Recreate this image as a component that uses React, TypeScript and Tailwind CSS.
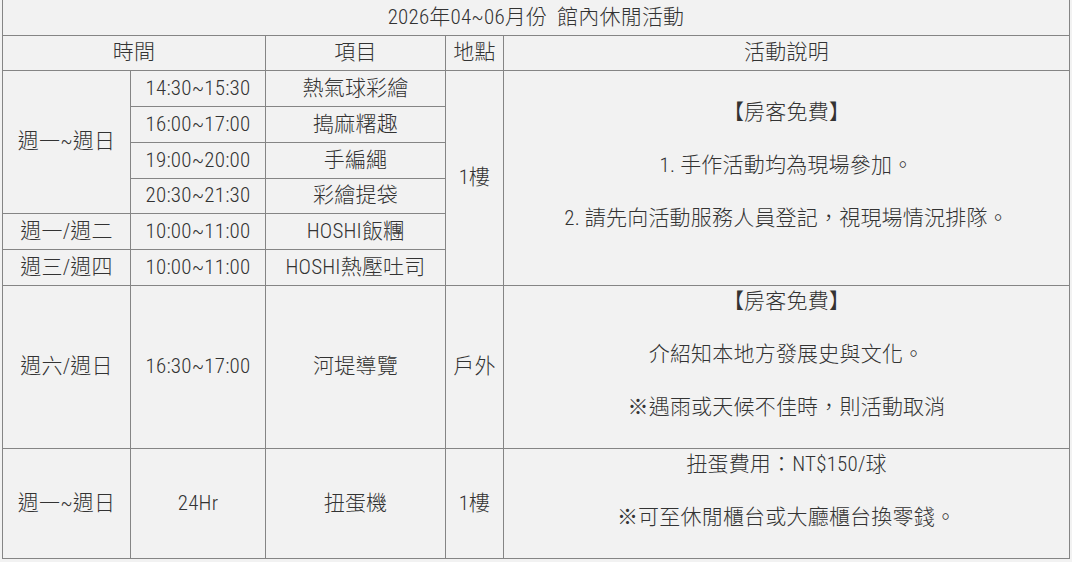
import React from 'react'

const cell = 'flex items-center justify-center text-center border-r border-b border-[#858585]'

const rows = [
  { time: '14:30~15:30', item: '熱氣球彩繪' },
  { time: '16:00~17:00', item: '搗麻糬趣' },
  { time: '19:00~20:00', item: '手編繩' },
  { time: '20:30~21:30', item: '彩繪提袋' },
]

function Desc({ lines }: { lines: string[] }) {
  return (
    <div className={`${cell} flex-col`}>
      {lines.map((l) => (
        <p key={l} className="mb-[26px] leading-[27px]">
          {l}
        </p>
      ))}
    </div>
  )
}

export default function App() {
  return (
    <div
      className="min-h-[562px] w-full bg-[#f2f2f2] text-[21px] font-light tracking-[0.2px] text-[#333] [font-stretch:84%]"
      style={{ fontFamily: 'Roboto, "Noto Sans CJK TC", sans-serif' }}
    >
      <div className="ml-[2px] grid w-[1067px] grid-cols-[128px_135px_180px_58px_566px] grid-rows-[36px_35px_36px_36px_36px_35px_36px_36px_163px_110px] border-l border-[#858585]">
        {/* title */}
        <div className={`${cell} col-span-5`}>2026年04~06月份&nbsp;&nbsp;館內休閒活動</div>

        {/* header */}
        <div className={`${cell} col-span-2`}>時間</div>
        <div className={cell}>項目</div>
        <div className={cell}>地點</div>
        <div className={cell}>活動說明</div>

        {/* 1F daily group */}
        <div className={`${cell} row-span-4`}>週一~週日</div>
        <div className={cell}>{rows[0].time}</div>
        <div className={cell}>{rows[0].item}</div>
        <div className={`${cell} row-span-6`}>1樓</div>
        <div className={`${cell} row-span-6 flex-col`}>
          <p className="mb-[26px] leading-[27px]">【房客免費】</p>
          <p className="mb-[26px] leading-[27px]">1. 手作活動均為現場參加。</p>
          <p className="mb-[26px] leading-[27px]">2. 請先向活動服務人員登記，視現場情況排隊。</p>
        </div>
        {rows.slice(1).map((r) => (
          <React.Fragment key={r.time}>
            <div className={cell}>{r.time}</div>
            <div className={cell}>{r.item}</div>
          </React.Fragment>
        ))}
        <div className={cell}>週一/週二</div>
        <div className={cell}>10:00~11:00</div>
        <div className={cell}>HOSHI飯糰</div>
        <div className={cell}>週三/週四</div>
        <div className={cell}>10:00~11:00</div>
        <div className={cell}>HOSHI熱壓吐司</div>

        {/* outdoor */}
        <div className={cell}>週六/週日</div>
        <div className={cell}>16:30~17:00</div>
        <div className={cell}>河堤導覽</div>
        <div className={cell}>戶外</div>
        <Desc lines={['【房客免費】', '介紹知本地方發展史與文化。', '※遇雨或天候不佳時，則活動取消']} />

        {/* gacha */}
        <div className={cell}>週一~週日</div>
        <div className={cell}>24Hr</div>
        <div className={cell}>扭蛋機</div>
        <div className={cell}>1樓</div>
        <Desc lines={['扭蛋費用：NT$150/球', '※可至休閒櫃台或大廳櫃台換零錢。']} />
      </div>
    </div>
  )
}
